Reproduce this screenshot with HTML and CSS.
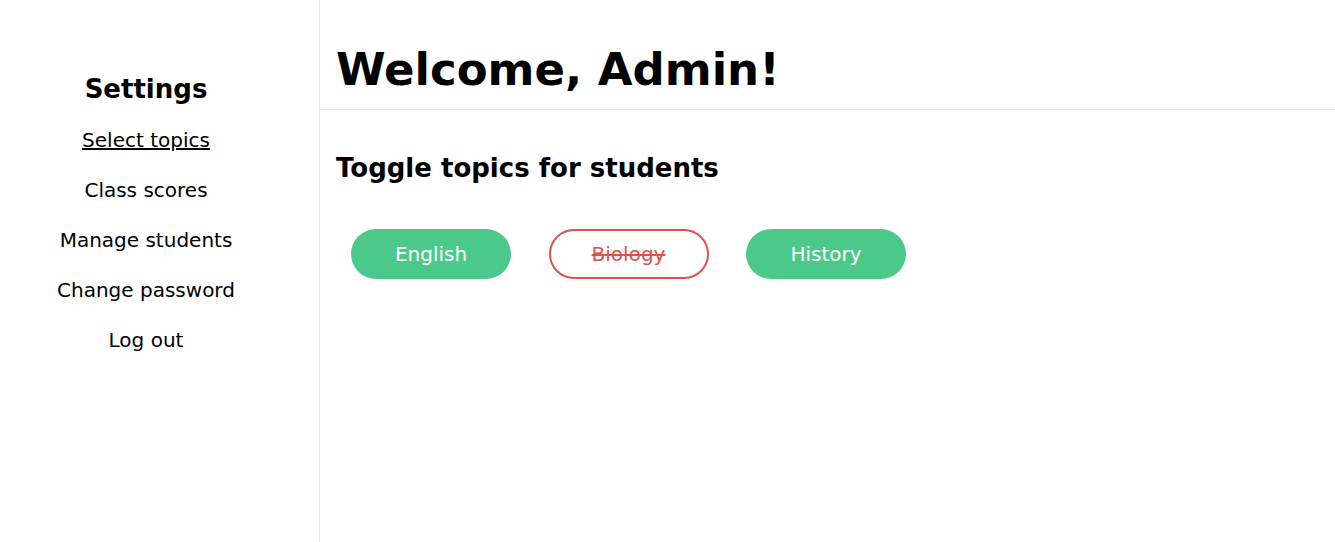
FILE: index.html
```html
<!DOCTYPE html>
<html>
<head>
<meta charset="utf-8">
<link rel="stylesheet" href="styles.css">
</head>
<body>
<div class="layout">
  <aside class="sidebar">
    <h2 class="side-title">Settings</h2>
    <nav class="side-nav">
      <a class="side-link active" href="#">Select topics</a>
      <a class="side-link" href="#">Class scores</a>
      <a class="side-link" href="#">Manage students</a>
      <a class="side-link" href="#">Change password</a>
      <a class="side-link" href="#">Log out</a>
    </nav>
  </aside>
  <main class="main">
    <header class="main-header">
      <h1 class="welcome">Welcome, Admin!</h1>
    </header>
    <section class="content">
      <h2 class="section-title">Toggle topics for students</h2>
      <div class="topics">
        <button class="topic on">English</button>
        <button class="topic off">Biology</button>
        <button class="topic on">History</button>
      </div>
    </section>
  </main>
</div>
</body>
</html>
```
FILE: styles.css
```css
* { box-sizing: border-box; }
html, body { margin: 0; height: 100%; }
body {
  font-family: "DejaVu Sans", sans-serif;
  color: #000;
  background: #fff;
}
.layout {
  display: flex;
  height: 100%;
}
.sidebar {
  width: 320px;
  flex: none;
  border-right: 1px solid #e6e6ee;
  display: flex;
  flex-direction: column;
  align-items: center;
  padding: 71px 27px 0 0;
}
.side-title {
  margin: 0;
  font-size: 26px;
  font-weight: 700;
  line-height: 36px;
}
.side-nav {
  display: flex;
  flex-direction: column;
  align-items: center;
  margin-top: 8px;
}
.side-link {
  color: #000;
  text-decoration: none;
  font-size: 20px;
  line-height: 50px;
}
.side-link.active { text-decoration: underline; }
.main {
  flex: 1;
  display: flex;
  flex-direction: column;
}
.main-header {
  border-bottom: 1px solid #e6e6ee;
  padding: 39px 16px 8px;
}
.welcome {
  margin: 0;
  font-size: 45px;
  font-weight: 700;
  line-height: 62px;
}
.section-title {
  margin: 40px 16px 0;
  font-size: 26px;
  font-weight: 700;
  line-height: 36px;
}
.topics {
  display: flex;
  gap: 37.5px;
  padding: 43px 0 0 31px;
}
.topic {
  width: 160px;
  height: 50px;
  border-radius: 25px;
  font-family: inherit;
  font-size: 20px;
  border: 2px solid transparent;
  background: #4bc98a;
  color: #fff;
  cursor: pointer;
}
.topic.off {
  background: #fff;
  border-color: #e0514a;
  color: #e0514a;
  text-decoration: line-through;
}
```
